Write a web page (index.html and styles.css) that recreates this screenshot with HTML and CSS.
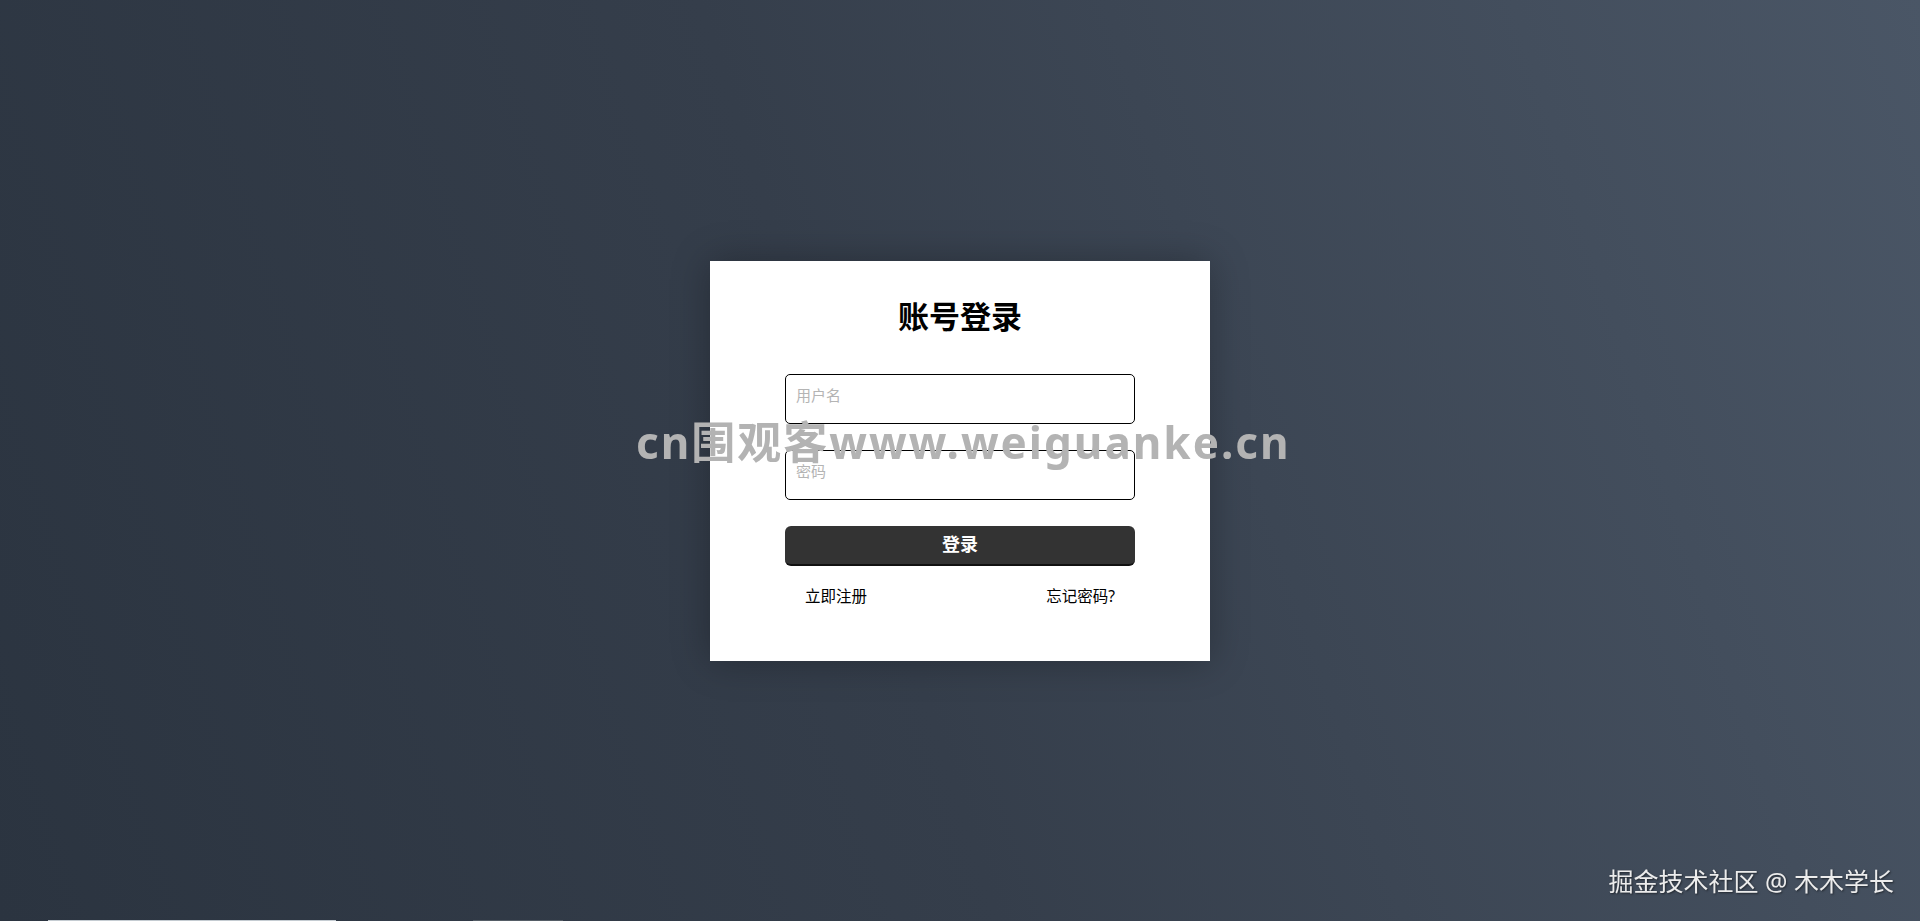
FILE: index.html
```html
<!DOCTYPE html>
<html lang="zh-CN">
<head>
  <meta charset="UTF-8">
  <meta name="viewport" content="width=device-width, initial-scale=1.0">
  <title>账号登录</title>
  <link rel="stylesheet" href="styles.css">
</head>
<body>
  <div class="login">
    <h2>账号登录</h2>
    <form class="form" onsubmit="return false">
      <input type="text" class="field" placeholder="用户名">
      <input type="password" class="field" placeholder="密码">
      <button type="submit" class="submit">登录</button>
      <div class="links">
        <a href="#">立即注册</a>
        <a href="#">忘记密码?</a>
      </div>
    </form>
  </div>

  <!-- 水印 -->
  <div class="watermark">cn围观客www.weiguanke.cn</div>
  <div class="credit">掘金技术社区 @ 木木学长</div>
  <div class="progress">
    <span class="played"></span>
    <span class="buffered"></span>
  </div>
</body>
</html>
```

FILE: styles.css
```css
html, body {
  height: 100%;
}

body {
  margin: 0;
  display: flex;
  justify-content: center;
  align-items: center;
  overflow: hidden;
  font-family: "Noto Sans", "Noto Sans CJK SC", sans-serif;
  background: linear-gradient(72deg, #2b3440 0%, #353e4b 45%, #4a5666 100%);
  color: #000;
}

.login {
  box-sizing: border-box;
  width: 500px;
  height: 400px;
  padding-top: 31px;
  background-color: #fff;
  box-shadow: 0 0 36px rgba(0, 0, 0, 0.28);
}

h2 {
  margin: 0;
  text-align: center;
  font-size: 31px;
  line-height: 48px;
  font-weight: bold;
}

.form {
  width: 350px;
  margin: 34px auto 0;
  display: flex;
  flex-direction: column;
}

.field {
  box-sizing: border-box;
  height: 50px;
  margin: 0 0 26px 0;
  padding: 0 10px 8px;
  border: 1px solid #000;
  border-radius: 5px;
  outline: none;
  font-family: inherit;
  font-size: 15px;
  background: #fff;
}

.field::placeholder {
  color: #b4b4b4;
}

.submit {
  height: 40px;
  padding: 0 0 3px;
  border: none;
  border-bottom: 2px solid #111;
  border-radius: 6px;
  background: #333;
  color: #fff;
  font-family: inherit;
  font-size: 18px;
  font-weight: bold;
  cursor: pointer;
}

.links {
  display: flex;
  justify-content: space-between;
  margin-top: 20px;
  padding: 0 20px;
  line-height: 20px;
  font-size: 15.5px;
}

.links a {
  color: #000;
  text-decoration: none;
}

.watermark {
  position: fixed;
  left: 636px;
  top: 414px;
  font-size: 44px;
  font-weight: bold;
  line-height: 56px;
  letter-spacing: 2px;
  color: #b3b3b3;
  white-space: nowrap;
  pointer-events: none;
}

.credit {
  position: fixed;
  right: 26px;
  bottom: 22px;
  font-size: 25px;
  line-height: 36px;
  color: #ececec;
  text-shadow: 1px 1px 2px rgba(0, 0, 0, 0.5);
}

.progress {
  position: fixed;
  left: 0;
  right: 0;
  bottom: 0;
  height: 1px;
}

.progress span {
  position: absolute;
  top: 0;
  height: 1px;
}

.played {
  left: 48px;
  width: 288px;
  background: #c5ccd2;
}

.buffered {
  left: 473px;
  width: 90px;
  background: #555d66;
}
```
